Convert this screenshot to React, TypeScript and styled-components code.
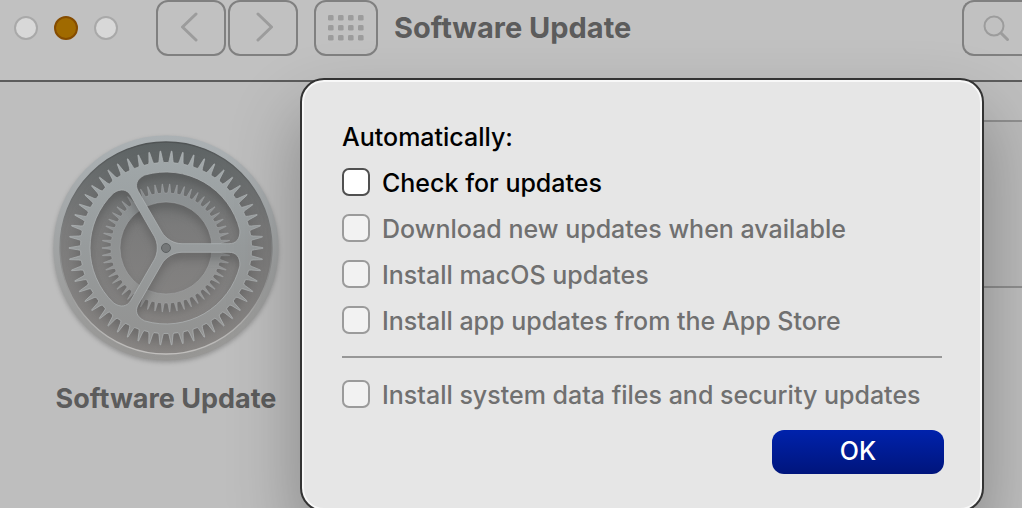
import React from "react";
import styled, { createGlobalStyle } from "styled-components";

const GlobalStyle = createGlobalStyle`
  *, *::before, *::after { box-sizing: border-box; }
  body { margin: 0; background: #bebebe; }
`;

const Window = styled.div`
  position: relative;
  display: flex;
  flex-direction: column;
  height: 100vh;
  overflow: hidden;
  background: #bebebe;
  font-family: Inter, "Liberation Sans", sans-serif;
  color: #5c5c5c;
`;

const Toolbar = styled.header`
  display: flex;
  align-items: center;
  flex: none;
  gap: 16px;
  padding: 0 0 24px 14px;
  background: #c1c1c1;
  border-bottom: 2px solid #5c5c5c;
`;

const TrafficLights = styled.div`
  display: flex;
  gap: 16px;
  margin-right: 22px;
`;

const Light = styled.button<{ $active?: boolean }>`
  width: 24px;
  height: 24px;
  padding: 0;
  border: 2px solid ${(p) => (p.$active ? "#854c00" : "#a9a9a9")};
  border-radius: 50%;
  background: ${(p) => (p.$active ? "#a06a00" : "#d8d8d8")};
`;

const NavGroup = styled.nav`
  display: flex;
  gap: 2px;
`;

const ToolButton = styled.button<{ $width: number }>`
  display: flex;
  align-items: center;
  justify-content: center;
  width: ${(p) => p.$width}px;
  height: 56px;
  padding: 0;
  border: 2px solid #808080;
  border-radius: 12px;
  background: transparent;
  color: #9c9c9c;
`;

const Title = styled.h1`
  flex: 1;
  margin: 0;
  font-size: 29px;
  line-height: 36px;
  font-weight: 700;
  white-space: nowrap;
`;

const SearchField = styled.label`
  display: flex;
  align-items: center;
  width: 60px;
  height: 56px;
  padding-left: 18px;
  border: 2px solid #808080;
  border-right: 0;
  border-radius: 12px 0 0 12px;
  color: #9c9c9c;

  svg { flex: none; }
`;

const SearchInput = styled.input`
  flex: 1;
  min-width: 0;
  padding: 0;
  border: 0;
  outline: 0;
  background: transparent;
  font: inherit;
`;

const Body = styled.main`
  display: grid;
  grid-template-columns: 332px 1fr;
  flex: 1;
`;

const Sidebar = styled.aside`
  display: flex;
  flex-direction: column;
  align-items: center;
  padding-top: 46px;
`;

const PaneName = styled.h2`
  margin: 14px 0 0;
  font-size: 27px;
  line-height: 34px;
  font-weight: 700;
`;

const Details = styled.section`
  padding-top: 38px;
`;

const DetailsBox = styled.div`
  height: 168px;
  border: 2px solid #8f8f8f;
  border-width: 2px 0;
  background: #bababa;
`;

const Dialog = styled.form`
  position: absolute;
  top: 78px;
  left: 300px;
  right: 38px;
  display: flex;
  flex-direction: column;
  padding: 42px 38px 36px 40px;
  border: 2px solid #333;
  border-radius: 24px;
  background: #e6e6e6;
  box-shadow: inset 0 0 0 2px #f8f8f8, 0 36px 70px rgba(0, 0, 0, 0.3);
  color: #000;
  font-size: 25px;
  font-weight: 500;
`;

const Options = styled.fieldset`
  display: flex;
  flex-direction: column;
  gap: 18px;
  min-width: 0;
  margin: 0;
  padding: 0;
  border: 0;
`;

const Legend = styled.legend`
  margin-bottom: 16px;
  padding: 0;
  line-height: 30px;
`;

const OptionRow = styled.label<{ $disabled?: boolean }>`
  display: flex;
  align-items: center;
  gap: 12px;
  height: 28px;
  white-space: nowrap;
  color: ${(p) => (p.$disabled ? "#707070" : "#000")};
`;

const OptionText = styled.span`
  padding-top: 2px;
  line-height: 28px;
`;

const Checkbox = styled.input`
  appearance: none;
  flex: none;
  width: 28px;
  height: 28px;
  margin: 0;
  border: 2px solid #505050;
  border-radius: 7px;
  background: #fff;

  &:disabled {
    border-color: #9b9b9b;
    background: #f2f2f2;
  }
`;

const Divider = styled.hr`
  width: 600px;
  max-width: 100%;
  height: 2px;
  margin: 22px 0;
  border: 0;
  background: #979797;
`;

const OkButton = styled.button`
  align-self: flex-end;
  width: 172px;
  height: 44px;
  margin-top: 22px;
  padding: 0 0 2px;
  border: 0;
  border-radius: 12px;
  background: linear-gradient(#0022ac, #00157c);
  color: #fff;
  font: 500 25px/42px Inter, "Liberation Sans", sans-serif;
`;

/* Gear geometry, centred on the origin. */
const polar = (r: number, deg: number) => {
  const a = (deg * Math.PI) / 180;
  return `${(r * Math.cos(a)).toFixed(2)},${(r * Math.sin(a)).toFixed(2)}`;
};

const circle = (r: number) => `M${r},0A${r},${r} 0 1 0 ${-r},0A${r},${r} 0 1 0 ${r},0Z`;

const teeth = (count: number, base: number, tip: number) => {
  const step = 360 / count;
  let d = "";
  for (let i = 0; i < count; i++) {
    const c = i * step;
    const depth = tip - base;
    d += `${i ? "L" : "M"}${polar(base, c - step * 0.28)}`;
    d += `Q${polar(base + depth * 0.08, c - step * 0.2)} ${polar(base + depth * 0.25, c - step * 0.17)}`;
    d += `L${polar(tip, c - step * 0.03)}L${polar(tip, c + step * 0.03)}`;
    d += `L${polar(base + depth * 0.25, c + step * 0.17)}`;
    d += `Q${polar(base + depth * 0.08, c + step * 0.2)} ${polar(base, c + step * 0.28)}`;
  }
  return d + "Z";
};

const opening = (turn: number) => {
  const at = (x: number, y: number, mirrored = false) => {
    const r = Math.hypot(x, y);
    const a = (Math.atan2(y, x) * 180) / Math.PI;
    return polar(r, (mirrored ? -120 - a : a) + turn);
  };
  return (
    `M${at(16, -4.3)}L${at(63, -4.3)}C${at(70, -4.3)} ${at(74.5, -9)} ${at(73.8, -18)}` +
    `A76,76 0 0 0 ${at(73.8, -18, true)}` +
    `C${at(74.5, -9, true)} ${at(70, -4.3, true)} ${at(63, -4.3, true)}` +
    `L${at(16, -4.3, true)}C${at(8, -4.3, true)} ${at(8, -4.3)} ${at(16, -4.3)}Z`
  );
};

const innerGear = teeth(54, 55, 64) + circle(46);
const outerGear = teeth(54, 85.5, 97) + opening(0) + opening(120) + opening(240) + circle(4.5);

const GearIcon = () => (
  <svg width="240" height="240" viewBox="-120 -120 240 240" aria-hidden="true">
    <defs>
      <linearGradient id="rim" x1="0" y1="0" x2="0" y2="1">
        <stop offset="0" stopColor="#abb1b4" />
        <stop offset="1" stopColor="#979694" />
      </linearGradient>
      <linearGradient id="well" x1="0" y1="0" x2="0" y2="1">
        <stop offset="0" stopColor="#5c6263" />
        <stop offset="0.4" stopColor="#7b7b7b" />
        <stop offset="1" stopColor="#8a8785" />
      </linearGradient>
      <linearGradient id="metal" gradientUnits="userSpaceOnUse" x1="0" y1="-97" x2="0" y2="97">
        <stop offset="0" stopColor="#a1a8aa" />
        <stop offset="0.5" stopColor="#979b9c" />
        <stop offset="1" stopColor="#929291" />
      </linearGradient>
      <linearGradient id="metalBack" gradientUnits="userSpaceOnUse" x1="0" y1="-64" x2="0" y2="64">
        <stop offset="0" stopColor="#8b9092" />
        <stop offset="1" stopColor="#959594" />
      </linearGradient>
      <linearGradient id="lip" x1="0" y1="0" x2="0" y2="1">
        <stop offset="0" stopColor="#4f5354" />
        <stop offset="0.6" stopColor="#8f9090" />
        <stop offset="1" stopColor="#c4c2c0" />
      </linearGradient>
      <filter id="cast" x="-20%" y="-20%" width="140%" height="150%" colorInterpolationFilters="sRGB">
        <feDropShadow dx="0" dy="6" stdDeviation="4" floodColor="#444" floodOpacity="0.4" />
      </filter>
      <filter id="drop" x="-20%" y="-20%" width="140%" height="140%" colorInterpolationFilters="sRGB">
        <feDropShadow dx="0" dy="2" stdDeviation="2" floodColor="#444" floodOpacity="0.35" />
      </filter>
    </defs>
    <circle r="112.6" fill="url(#rim)" filter="url(#drop)" />
    <circle r="106" fill="url(#well)" stroke="url(#lip)" strokeWidth="1.3" />
    <g filter="url(#cast)">
      <path d={innerGear} fill="url(#metalBack)" fillRule="evenodd" stroke="#a6a9aa" strokeWidth="0.5" />
    </g>
    <g filter="url(#cast)">
      <path d={outerGear} fill="url(#metal)" fillRule="evenodd" stroke="#b2b6b7" strokeWidth="0.7" />
    </g>
    <circle r="4.5" fill="#747778" stroke="#5d6162" strokeWidth="1" />
  </svg>
);

const Chevron = ({ points, label }: { points: string; label: string }) => (
  <svg width="20" height="32" viewBox="0 0 20 32" role="img" aria-label={label}>
    <polyline points={points} fill="none" stroke="currentColor" strokeWidth="3" strokeLinecap="round" strokeLinejoin="round" />
  </svg>
);

const GridIcon = () => (
  <svg width="36" height="26" viewBox="0 0 36 26" aria-hidden="true">
    {[0, 10, 20].map((y) =>
      [0, 10, 20, 30].map((x) => (
        <rect key={`${x}-${y}`} x={x} y={y} width="5.6" height="5.6" rx="1.4" fill="currentColor" />
      ))
    )}
  </svg>
);

const SearchIcon = () => (
  <svg width="28" height="28" viewBox="0 0 28 28" fill="none" stroke="currentColor" strokeLinecap="round" aria-hidden="true">
    <circle cx="12" cy="12" r="9.5" strokeWidth="2" />
    <path d="M19 19L25.5 25.5" strokeWidth="3" />
  </svg>
);

const Option = ({ label, disabled }: { label: string; disabled?: boolean }) => (
  <OptionRow $disabled={disabled}>
    <Checkbox type="checkbox" disabled={disabled} />
    <OptionText>{label}</OptionText>
  </OptionRow>
);

export default function App() {
  return (
    <>
      <GlobalStyle />
      <Window>
        <Toolbar>
          <TrafficLights>
            <Light aria-label="Close" />
            <Light $active aria-label="Minimize" />
            <Light aria-label="Zoom" />
          </TrafficLights>
          <NavGroup>
            <ToolButton $width={70}>
              <Chevron label="Back" points="15,2 1.5,15 15,28" />
            </ToolButton>
            <ToolButton $width={70}>
              <Chevron label="Forward" points="5,2 18.5,15 5,28" />
            </ToolButton>
          </NavGroup>
          <ToolButton $width={64} aria-label="Show all">
            <GridIcon />
          </ToolButton>
          <Title>Software Update</Title>
          <SearchField>
            <SearchIcon />
            <SearchInput type="search" aria-label="Search" />
          </SearchField>
        </Toolbar>
        <Body>
          <Sidebar>
            <GearIcon />
            <PaneName>Software Update</PaneName>
          </Sidebar>
          <Details>
            <DetailsBox />
          </Details>
        </Body>
        <Dialog onSubmit={(e) => e.preventDefault()}>
          <Options>
            <Legend>Automatically:</Legend>
            <Option label="Check for updates" />
            <Option label="Download new updates when available" disabled />
            <Option label="Install macOS updates" disabled />
            <Option label="Install app updates from the App Store" disabled />
          </Options>
          <Divider />
          <Option label="Install system data files and security updates" disabled />
          <OkButton type="submit">OK</OkButton>
        </Dialog>
      </Window>
    </>
  );
}
